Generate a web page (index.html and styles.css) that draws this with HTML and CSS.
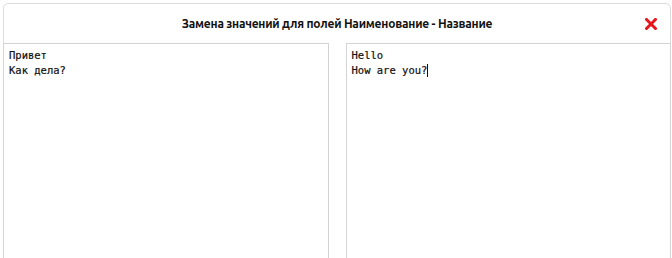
FILE: index.html
```html
<!DOCTYPE html>
<html lang="ru">
<head>
    <meta charset="UTF-8">
    <title>Замена значений</title>
    <link rel="stylesheet" href="styles.css">
</head>
<body>
    <div class="dialog">
        <div class="dialog-header">
            <span class="dialog-title">Замена значений для полей Наименование - Название</span>
            <button class="close-btn" title="Закрыть">
                <svg width="12" height="12" viewBox="0 0 12 12">
                    <path d="M1.5 1.5 L10.5 10.5 M10.5 1.5 L1.5 10.5" stroke="#e8141b" stroke-width="3" stroke-linecap="square"/>
                </svg>
            </button>
        </div>
        <div class="dialog-body">
            <div class="text-pane">Привет
Как дела?</div>
            <div class="text-pane">Hello
How are you?<span class="caret"></span></div>
        </div>
    </div>
</body>
</html>
```

FILE: styles.css
```css
body {
    margin: 0;
    padding: 3px 1px 0 3px;
    background-color: #fff;
    font-family: 'Ubuntu', 'Liberation Sans', sans-serif;
    overflow: hidden;
}

.dialog {
    height: 260px;
    border: 1px solid #dcdcdc;
    border-radius: 5px;
    display: flex;
    flex-direction: column;
}

.dialog-header {
    height: 39px;
    display: flex;
    align-items: center;
    justify-content: center;
    position: relative;
}

.dialog-title {
    font-size: 12px;
    font-weight: bold;
    color: #111;
    letter-spacing: -0.22px;
}

.close-btn {
    position: absolute;
    right: 12px;
    top: 13px;
    width: 14px;
    height: 14px;
    padding: 0;
    border: none;
    background: none;
    cursor: pointer;
    display: flex;
    align-items: center;
    justify-content: center;
}

.dialog-body {
    flex: 1;
    display: grid;
    grid-template-columns: 1fr 1fr;
    gap: 17px;
    margin: 0 -1px;
}

.text-pane {
    border: 1px solid #d4d4d4;
    padding: 4px 5px;
    white-space: pre;
    font-family: 'DejaVu Sans Mono', monospace;
    font-size: 10.5px;
    line-height: 15px;
    color: #111;
    -webkit-text-stroke: 0.2px #111;
}

.caret {
    display: inline-block;
    width: 1px;
    height: 13px;
    background: #111;
    vertical-align: -3px;
}
```
